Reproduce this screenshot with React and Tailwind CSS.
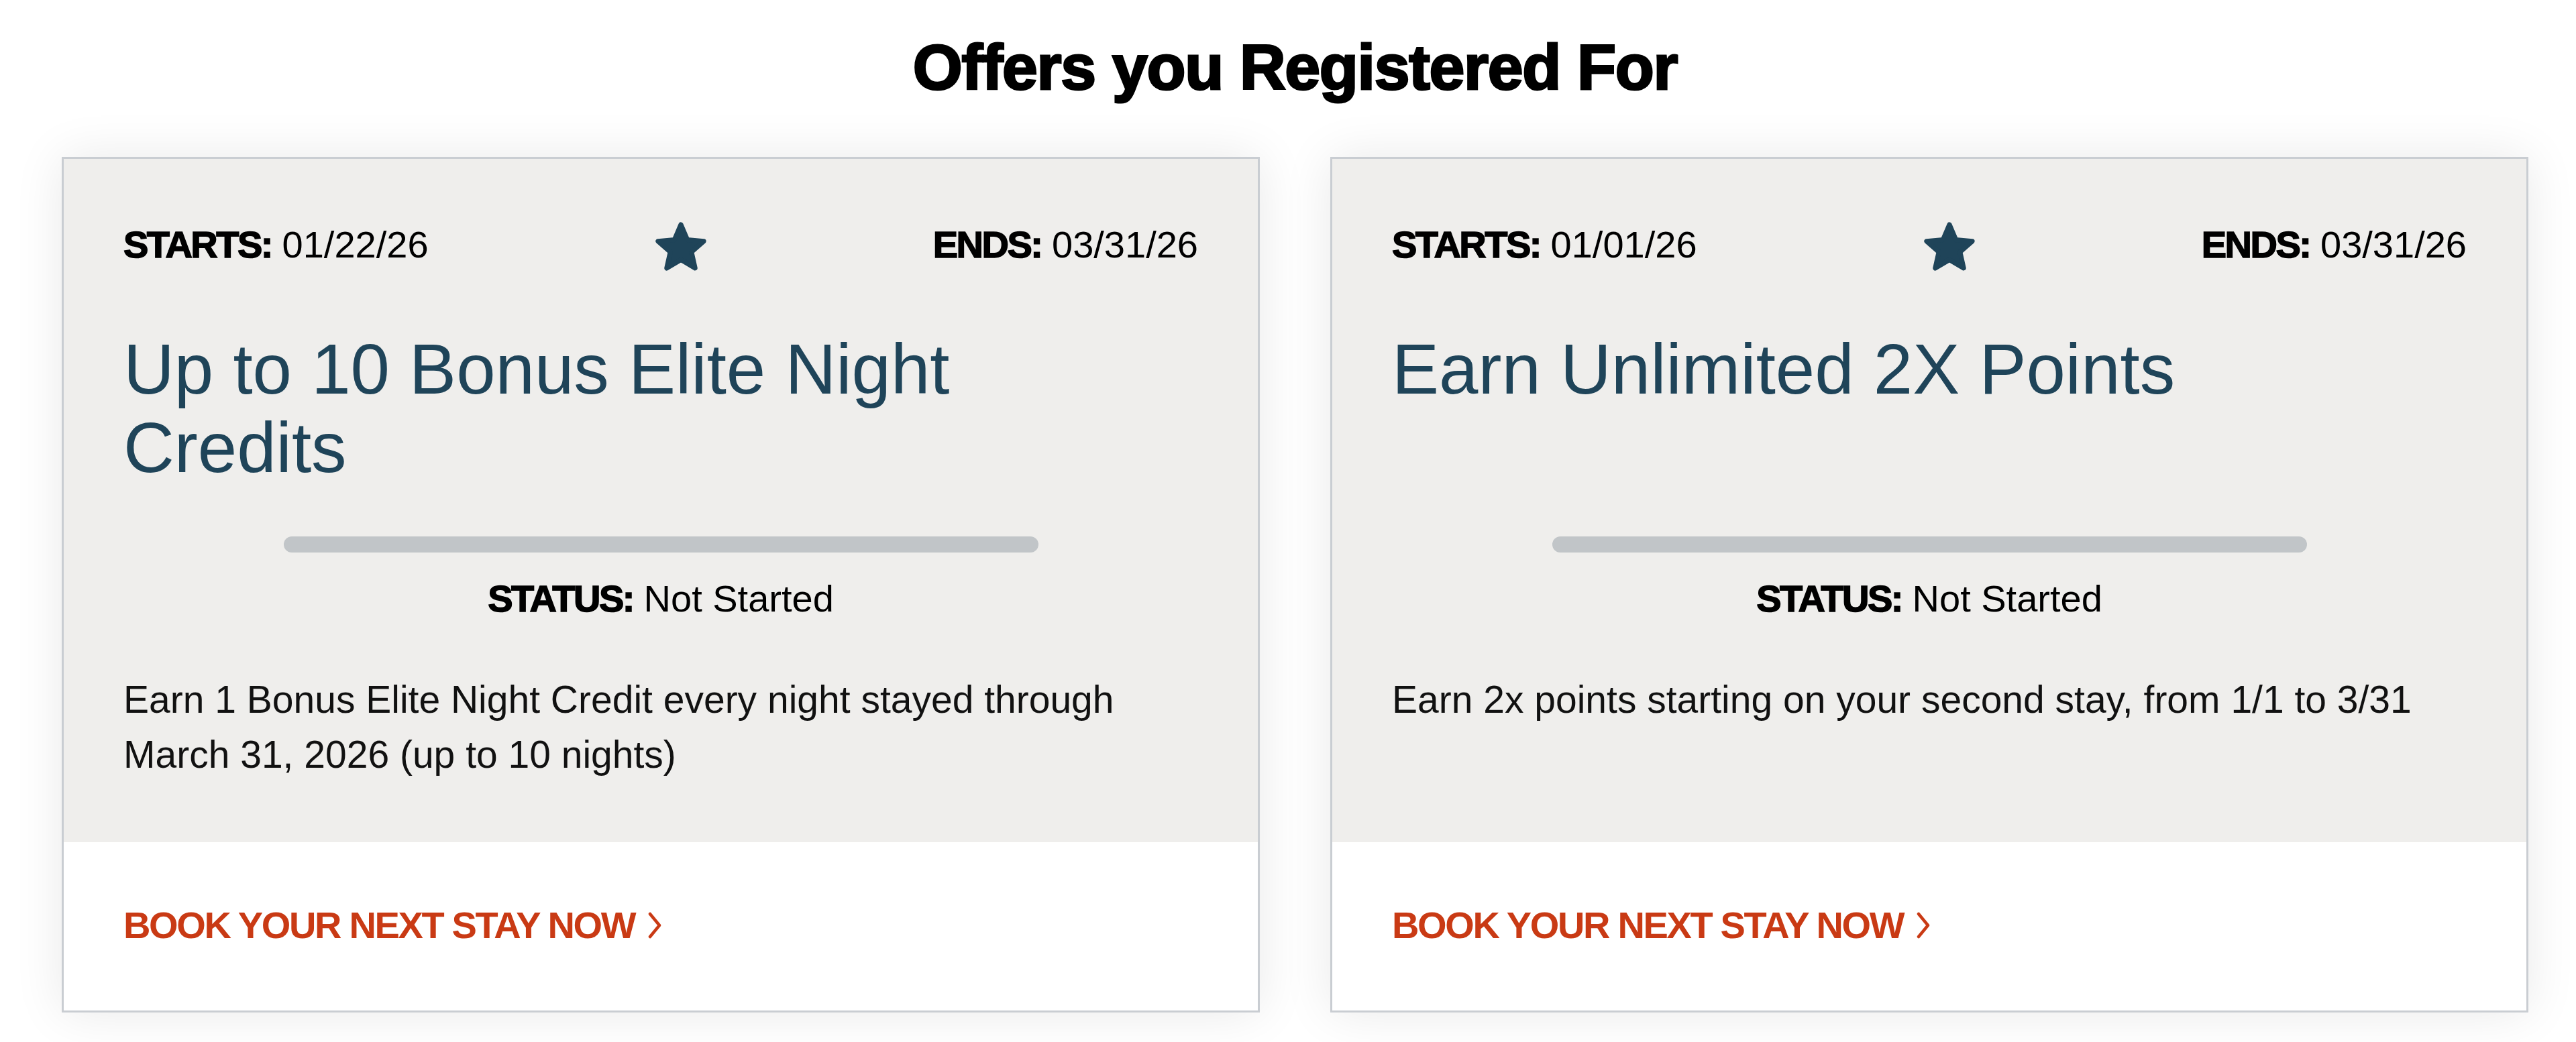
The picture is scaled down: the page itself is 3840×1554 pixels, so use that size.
import React from 'react';

// Ofertas registradas por el usuario
const offers = [
    {
        id: 1,
        starts: '01/22/26',
        ends: '03/31/26',
        title: 'Up to 10 Bonus Elite Night Credits',
        status: 'Not Started',
        description: 'Earn 1 Bonus Elite Night Credit every night stayed through March 31, 2026 (up to 10 nights)',
    },
    {
        id: 2,
        starts: '01/01/26',
        ends: '03/31/26',
        title: 'Earn Unlimited 2X Points',
        status: 'Not Started',
        description: 'Earn 2x points starting on your second stay, from 1/1 to 3/31',
    },
];

// Estrella de oferta registrada (puntas redondeadas)
function StarIcon() {
    return (
        <svg width="76" height="75" viewBox="1.4 1.7 21.2 20.9" className="mt-[8px] shrink-0">
            <polygon
                points="12,2.8 14.7,9.1 21.5,9.7 16.4,14.2 17.9,20.9 12,17.4 6.1,20.9 7.6,14.2 2.5,9.7 9.3,9.1"
                fill="#1f4459"
                stroke="#1f4459"
                strokeWidth="2"
                strokeLinejoin="round"
            />
        </svg>
    );
}

function Chevron() {
    return (
        <svg width="24" height="40" viewBox="0 0 24 40" className="ml-[18px] shrink-0">
            <polyline points="5,3 19,20 5,37" fill="none" stroke="#c93a14" strokeWidth="4.5" strokeLinecap="round" strokeLinejoin="round" />
        </svg>
    );
}

// Etiqueta en negrita gruesa (STARTS:, ENDS:, STATUS:)
function Label({ children }) {
    return <span className="font-bold tracking-[-2.5px] [-webkit-text-stroke:1.5px_black]">{children}</span>;
}

function OfferCard({ starts, ends, title, status, description }) {
    return (
        <div className="flex flex-col border-[3px] border-[#c9cdd2] bg-white shadow-[0_0_70px_rgba(0,0,0,0.09)]">
            {/* Parte superior gris */}
            <div className="flex flex-1 flex-col bg-[#efeeec] px-[89px] pt-[86px] pb-[90px]">
                <div className="flex items-center justify-between text-[56px] leading-none text-black">
                    <span>
                        <Label>STARTS:</Label> {starts}
                    </span>
                    <StarIcon />
                    <span>
                        <Label>ENDS:</Label> {ends}
                    </span>
                </div>

                <h2 className="mt-[86px] min-h-[234px] max-w-[1400px] text-[105px] leading-[117px] font-normal text-[#1f4459]">{title}</h2>

                <div className="mx-auto mt-[74px] h-[24px] w-[1125px] rounded-full bg-[#c1c5c8]" />

                <p className="mt-[41px] text-center text-[56px] leading-none text-black">
                    <Label>STATUS:</Label> {status}
                </p>

                <p className="mt-[81px] text-[57px] leading-[82px] text-[#111]">{description}</p>
            </div>

            {/* Enlace inferior */}
            <div className="px-[89px] pt-[96px] pb-[99px]">
                <a href="#" className="flex items-center text-[56px] leading-none font-bold tracking-[-2.35px] text-[#c93a14]">
                    BOOK YOUR NEXT STAY NOW
                    <Chevron />
                </a>
            </div>
        </div>
    );
}

export default function App() {
    return (
        <div className="min-h-screen bg-white pt-[53px] pr-[71px] pb-[44px] pl-[92px] font-['Liberation_Sans',Arial,sans-serif]">
            <h1 className="text-center text-[95px] leading-none font-bold tracking-[-1.3px] text-black [-webkit-text-stroke:3px_black]">
                Offers you Registered For
            </h1>

            <div className="mt-[86px] grid grid-cols-2 gap-[105px]">
                {offers.map((offer) => (
                    <OfferCard key={offer.id} {...offer} />
                ))}
            </div>
        </div>
    );
}
